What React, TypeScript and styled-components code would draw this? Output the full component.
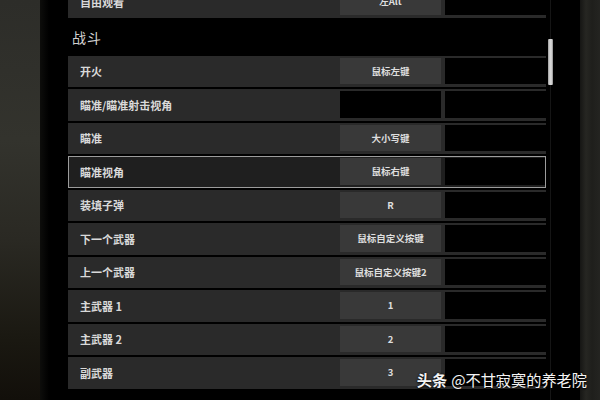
import React from 'react';
import styled, { createGlobalStyle } from 'styled-components';

const GlobalStyle = createGlobalStyle`
  *, *::before, *::after {
    box-sizing: border-box;
  }
  html, body {
    margin: 0;
    padding: 0;
    background: #000;
  }
  body {
    width: 600px;
    height: 400px;
    overflow: hidden;
    font-family: "Noto Sans CJK SC", "Noto Sans", sans-serif;
  }
`;

const Screen = styled.div`
  position: relative;
  display: flex;
  width: 600px;
  height: 400px;
  background: #000;
  overflow: hidden;
`;

const SideGlow = styled.div`
  flex: none;
  width: 40px;
  background: linear-gradient(180deg, #2d2d29 0%, #33332d 35%, #2a2923 60%, #1a1811 85%, #120f0a 100%);
`;

const Gutter = styled.div`
  flex: none;
  width: 28px;
  background: linear-gradient(90deg, #0d0d0b 0, #000 9px);
`;

const Viewport = styled.div`
  flex: none;
  width: 478px;
  height: 400px;
  overflow: hidden;
`;

const List = styled.div`
  display: flex;
  flex-direction: column;
  margin-top: -14px;
`;

const SectionTitle = styled.div`
  display: flex;
  align-items: center;
  height: 34px;
  padding-left: 4px;
  margin-bottom: 2px;
  font-size: 14px;
  color: #d2d2d2;
  letter-spacing: 1px;
`;

const Row = styled.div<{ $selected?: boolean }>`
  display: grid;
  grid-template-columns: 268px 101px 102px;
  column-gap: 4px;
  height: 31.5px;
  margin-bottom: 2px;
  padding-right: 3px;
  background: ${p => (p.$selected ? '#1f1f1f' : '#2a2a2a')};
  outline: ${p => (p.$selected ? '1.5px solid #9c9c9c' : 'none')};
  outline-offset: -1.5px;
`;

const Label = styled.div`
  display: flex;
  align-items: center;
  padding-left: 12px;
  font-size: 11px;
  font-weight: 700;
  color: #d9d9d9;
  white-space: nowrap;
`;

const KeyBox = styled.div<{ $empty?: boolean }>`
  display: flex;
  align-items: center;
  justify-content: center;
  margin: 2px 0 3px;
  background: ${p => (p.$empty ? '#000' : '#393939')};
  font-size: 9.5px;
  font-weight: 700;
  color: #dedede;
  white-space: nowrap;
`;

const AltBox = styled.div`
  margin: 2px 0 3px;
  background: #000;
`;

const ScrollColumn = styled.div`
  flex: none;
  width: 34px;
  padding-left: 2px;
  background: linear-gradient(90deg, #000 0, #000 4px, #151515 4px, #151515 5px, #000 5px);
`;

const Thumb = styled.div`
  width: 5px;
  height: 46px;
  margin-top: 39px;
  background: linear-gradient(90deg, #9a9a9a, #dcdcdc 40%, #cfcfcf 70%, #8a8a8a);
  border-radius: 1px;
`;

const EdgeStrip = styled.div`
  flex: none;
  width: 20px;
  background: linear-gradient(90deg, #161614 0%, #262622 30%, #1f1f1c 60%, #242421 100%);
`;

const Watermark = styled.div`
  position: absolute;
  right: 13px;
  bottom: 10px;
  font-size: 15.2px;
  color: #f4f4f4;
  white-space: nowrap;
  text-shadow: 0 0 2px rgba(0, 0, 0, 0.9), 0 1px 2px rgba(0, 0, 0, 0.8);
`;

const Brand = styled.span`
  font-weight: 700;
  margin-right: 4px;
`;

type Binding = { action: string; key?: string; selected?: boolean };

const before: Binding[] = [{ action: '自由观看', key: '左Alt' }];

const combat: Binding[] = [
  { action: '开火', key: '鼠标左键' },
  { action: '瞄准/瞄准射击视角' },
  { action: '瞄准', key: '大小写键' },
  { action: '瞄准视角', key: '鼠标右键', selected: true },
  { action: '装填子弹', key: 'R' },
  { action: '下一个武器', key: '鼠标自定义按键' },
  { action: '上一个武器', key: '鼠标自定义按键2' },
  { action: '主武器 1', key: '1' },
  { action: '主武器 2', key: '2' },
  { action: '副武器', key: '3' },
];

const BindingRow = ({ b }: { b: Binding }) => (
  <Row $selected={b.selected}>
    <Label>{b.action}</Label>
    <KeyBox $empty={!b.key}>{b.key}</KeyBox>
    <AltBox />
  </Row>
);

export default function App() {
  return (
    <>
      <GlobalStyle />
      <Screen>
        <SideGlow />
        <Gutter />
        <Viewport>
          <List>
            {before.map(b => (
              <BindingRow key={b.action} b={b} />
            ))}
            <SectionTitle>战斗</SectionTitle>
            {combat.map(b => (
              <BindingRow key={b.action} b={b} />
            ))}
          </List>
        </Viewport>
        <ScrollColumn>
          <Thumb />
        </ScrollColumn>
        <EdgeStrip />
        <Watermark>
          <Brand>头条</Brand>@不甘寂寞的养老院
        </Watermark>
      </Screen>
    </>
  );
}
